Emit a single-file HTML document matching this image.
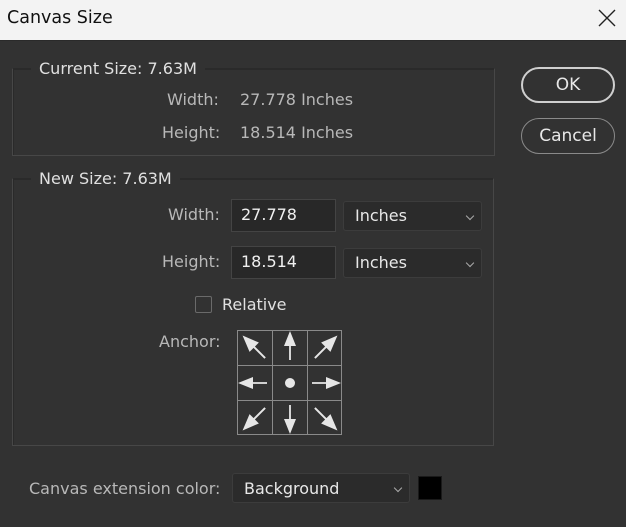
<!DOCTYPE html>
<html><head><style>
*{margin:0;padding:0;box-sizing:border-box}
body{width:626px;height:527px;background:#323232;font-family:"DejaVu Sans","Liberation Sans",sans-serif;color:#d8d8d8;position:relative;overflow:hidden}
.a{position:absolute;white-space:nowrap}
.title{left:0;top:0;width:626px;height:41px;background:#f3f3f3;border-bottom:1px solid #2a2a2a}
.grp{border:1px solid #474747;border-top-color:#2a2a2a;box-shadow:inset 1px 1px 0 #2a2a2a}
.lbl{background:#323232;padding:0 8px;font-size:16px;color:#e0e0e0}
.t{font-size:16px;color:#b8b8b8}
.inp{background:#282828;border:1px solid #444;color:#f0f0f0;font-size:16px;padding-left:9px;line-height:30px}
.sel{background:#2b2b2b;border:1px solid #3c3c3c;border-radius:3px;color:#e8e8e8;font-size:16px;padding-left:11px;line-height:28px}
.chev{position:absolute;right:8px;top:11px;width:6px;height:6px;border-right:1px solid #aaa;border-bottom:1px solid #aaa;transform:rotate(45deg)}
.btn{border-radius:18px;text-align:center;font-size:17px;color:#e8e8e8}
</style></head><body>
<div class="a title"></div>
<div class="a" style="left:7px;top:8px;font-size:17.5px;color:#111">Canvas Size</div>
<svg class="a" style="left:598px;top:9px" width="18" height="18"><path d="M1 1L17 17M17 1L1 17" stroke="#222" stroke-width="1.4"/></svg>

<div class="a grp" style="left:12px;top:68px;width:483px;height:88px"></div>
<div class="a lbl" style="left:31px;top:59px">Current Size: 7.63M</div>
<div class="a t" style="left:167px;top:90px">Width:</div>
<div class="a t" style="left:240px;top:90px">27.778 Inches</div>
<div class="a t" style="left:162px;top:123px">Height:</div>
<div class="a t" style="left:240px;top:123px">18.514 Inches</div>

<div class="a grp" style="left:12px;top:178px;width:482px;height:268px"></div>
<div class="a lbl" style="left:31px;top:169px">New Size: 7.63M</div>
<div class="a t" style="left:168px;top:205px">Width:</div>
<div class="a inp" style="left:231px;top:199px;width:105px;height:33px">27.778</div>
<div class="a sel" style="left:343px;top:201px;width:139px;height:30px">Inches<div class="chev"></div></div>
<div class="a t" style="left:162px;top:252px">Height:</div>
<div class="a inp" style="left:231px;top:246px;width:105px;height:33px">18.514</div>
<div class="a sel" style="left:343px;top:248px;width:139px;height:30px">Inches<div class="chev"></div></div>
<div class="a" style="left:195px;top:296px;width:17px;height:17px;border:1px solid #6a6a6a;border-radius:2px"></div>
<div class="a" style="left:222px;top:295px;font-size:16px;color:#e0e0e0">Relative</div>
<div class="a t" style="left:159px;top:332px">Anchor:</div>
<svg class="a" style="left:237px;top:330px" width="106" height="106">
<defs><g id="ar"><path d="M0 13V-6" stroke="#e6e6e6" stroke-width="1.8"/><path d="M0 -16L-6 -1L6 -1Z" fill="#e6e6e6"/></g></defs>
<g stroke="#8a8a8a" stroke-width="1" fill="none"><rect x="0.5" y="0.5" width="104" height="104"/><path d="M35.5 0V105M70.5 0V105M0 35.5H105M0 70.5H105"/></g>
<use href="#ar" transform="translate(18,18) rotate(-45) scale(1.1)"/>
<use href="#ar" transform="translate(53,17)"/>
<use href="#ar" transform="translate(88,18) rotate(45) scale(1.1)"/>
<use href="#ar" transform="translate(17,53) rotate(-90)"/>
<circle cx="53" cy="53" r="5" fill="#e6e6e6"/>
<use href="#ar" transform="translate(88,53) rotate(90)"/>
<use href="#ar" transform="translate(18,88) rotate(-135) scale(1.1)"/>
<use href="#ar" transform="translate(53,88) rotate(180)"/>
<use href="#ar" transform="translate(88,88) rotate(135) scale(1.1)"/>
</svg>

<div class="a btn" style="left:521px;top:67px;width:94px;height:36px;border:2px solid #cfcfcf;line-height:32px">OK</div>
<div class="a btn" style="left:521px;top:118px;width:94px;height:36px;border:1px solid #8a8a8a;line-height:34px">Cancel</div>

<div class="a t" style="left:29px;top:479px">Canvas extension color:</div>
<div class="a sel" style="left:232px;top:473px;width:178px;height:30px;line-height:30px">Background<div class="chev"></div></div>
<div class="a" style="left:418px;top:476px;width:24px;height:24px;background:#000;border:1px solid #1a1a1a"></div>
</body></html>
